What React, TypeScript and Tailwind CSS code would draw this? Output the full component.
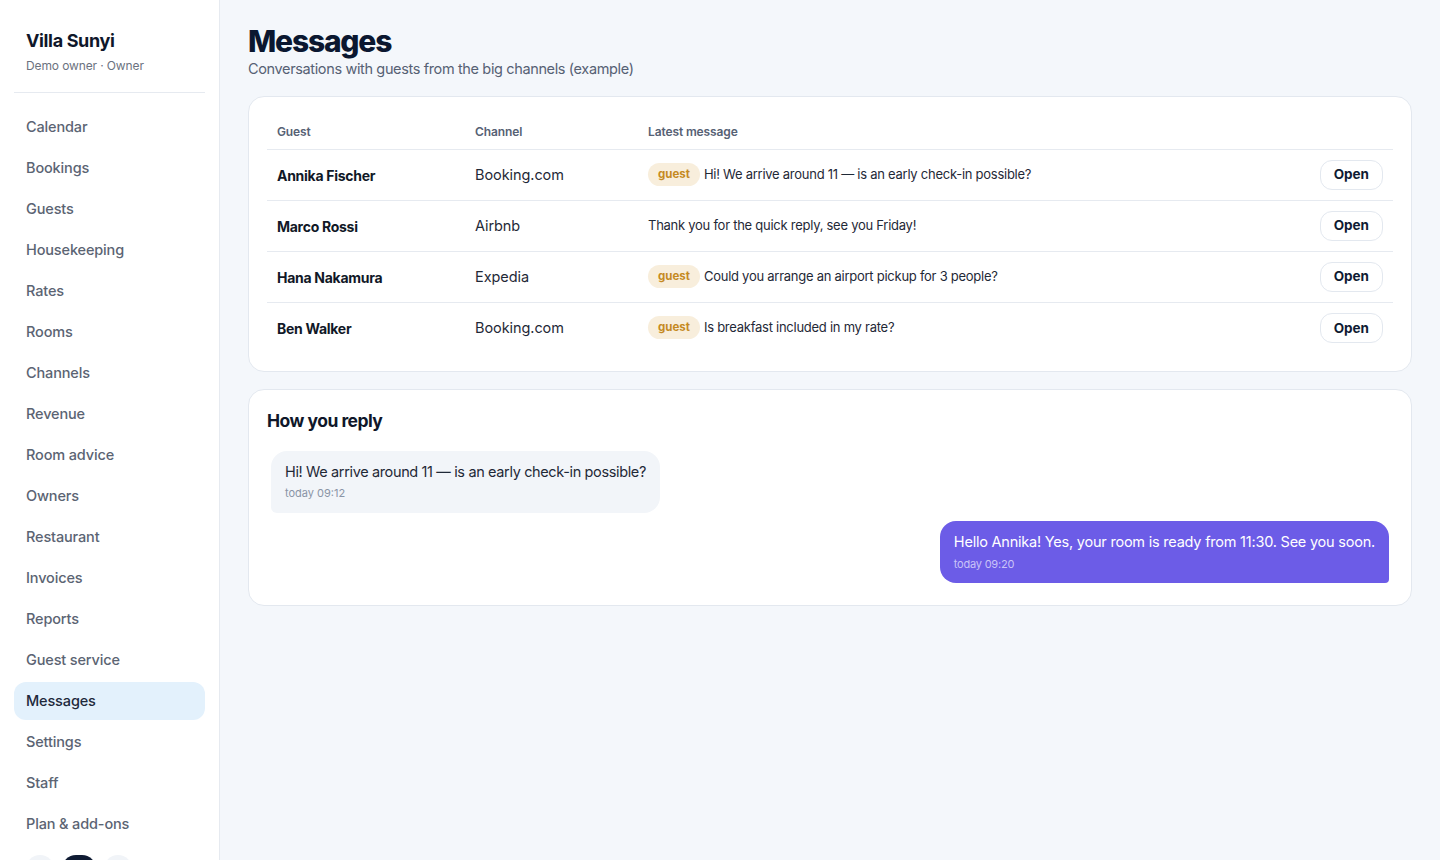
const navItems = [
  'Calendar',
  'Bookings',
  'Guests',
  'Housekeeping',
  'Rates',
  'Rooms',
  'Channels',
  'Revenue',
  'Room advice',
  'Owners',
  'Restaurant',
  'Invoices',
  'Reports',
  'Guest service',
  'Messages',
  'Settings',
  'Staff',
  'Plan & add-ons',
]

interface Conversation {
  guest: string
  channel: string
  message: string
  fromGuest: boolean
}

const conversations: Conversation[] = [
  {
    guest: 'Annika Fischer',
    channel: 'Booking.com',
    message: 'Hi! We arrive around 11 — is an early check-in possible?',
    fromGuest: true,
  },
  {
    guest: 'Marco Rossi',
    channel: 'Airbnb',
    message: 'Thank you for the quick reply, see you Friday!',
    fromGuest: false,
  },
  {
    guest: 'Hana Nakamura',
    channel: 'Expedia',
    message: 'Could you arrange an airport pickup for 3 people?',
    fromGuest: true,
  },
  {
    guest: 'Ben Walker',
    channel: 'Booking.com',
    message: 'Is breakfast included in my rate?',
    fromGuest: true,
  },
]

export default function App() {
  return (
    <div className="flex min-h-screen bg-[#f4f7fb] font-['Inter',sans-serif] text-[#0f172a]">
      {/* Sidebar */}
      <aside className="w-[220px] shrink-0 border-r border-[#e6eaf0] bg-white px-[14px] pt-[29px]">
        <div className="px-3 pb-[17px] border-b border-[#e6eaf0]">
          <div className="text-[18px] font-bold tracking-[-0.02em] leading-[24px]">Villa Sunyi</div>
          <div className="mt-[4px] text-[12px] text-[#6b7280] tracking-[-0.01em]">Demo owner · Owner</div>
        </div>
        <nav className="mt-[15px] flex flex-col gap-[3px]">
          {navItems.map((item) => (
            <div
              key={item}
              className={
                item === 'Messages'
                  ? 'h-[38px] flex items-center px-3 rounded-xl bg-[#e3f1fc] text-[14.5px] font-medium text-[#1e293b] tracking-[-0.01em]'
                  : 'h-[38px] flex items-center px-3 rounded-xl text-[14.5px] font-medium text-[#5b6473] tracking-[-0.01em]'
              }
            >
              {item}
            </div>
          ))}
        </nav>
        <div className="mt-[12px] flex gap-2 px-3">
          <span className="h-7 w-7 rounded-full bg-[#f1f4f8]" />
          <span className="h-7 w-[34px] rounded-full bg-[#0f1b33]" />
          <span className="h-7 w-7 rounded-full bg-[#f1f4f8]" />
        </div>
      </aside>

      {/* Main */}
      <main className="flex-1 pl-[28px] pr-[28px] pt-[22px]">
        <h1 className="text-[30px] font-extrabold leading-[38px] tracking-[-0.04em] text-[#0b1730]">Messages</h1>
        <p className="text-[14.5px] text-[#566174] tracking-[-0.025em] leading-[18px]">
          Conversations with guests from the big channels (example)
        </p>

        <section className="mt-[18px] rounded-2xl border border-[#e3e8ef] bg-white p-[18px]">
          <table className="w-full border-collapse text-left">
            <thead>
              <tr className="border-b border-[#e6eaf0]">
                <th className="h-[34px] w-[198px] px-[10px] text-[12px] font-semibold text-[#566174] tracking-[-0.01em]">Guest</th>
                <th className="h-[34px] w-[173px] px-[10px] text-[12px] font-semibold text-[#566174] tracking-[-0.01em]">Channel</th>
                <th className="h-[34px] px-[10px] text-[12px] font-semibold text-[#566174] tracking-[-0.01em]">Latest message</th>
                <th className="h-[34px] px-[10px]" />
              </tr>
            </thead>
            <tbody>
              {conversations.map((c, i) => (
                <tr key={c.guest} className={i < conversations.length - 1 ? 'border-b border-[#e6eaf0]' : ''}>
                  <td className="h-[51px] px-[10px] pt-[1px] text-[14px] font-bold text-[#111827] tracking-[-0.02em]">{c.guest}</td>
                  <td className="h-[51px] px-[10px] pt-[1px] text-[14.5px] text-[#1f2937] tracking-[-0.005em]">{c.channel}</td>
                  <td className="h-[51px] px-[10px]">
                    <div className="flex items-center gap-[4px]">
                      {c.fromGuest && (
                        <span className="rounded-full bg-[#f8eedc] px-[10px] py-[3px] text-[11.5px] font-bold text-[#c58a22]">
                          guest
                        </span>
                      )}
                      <span className="text-[13px] text-[#1f2937] tracking-[-0.02em]">{c.message}</span>
                    </div>
                  </td>
                  <td className="h-[51px] px-[10px] text-right">
                    <button className="h-[30px] rounded-xl border border-[#e3e8ef] bg-white px-[13px] text-[13.5px] font-bold text-[#0f1b33]">
                      Open
                    </button>
                  </td>
                </tr>
              ))}
            </tbody>
          </table>
        </section>

        <section className="mt-[17px] rounded-2xl border border-[#e3e8ef] bg-white px-[18px] pt-[20px] pb-[22px]">
          <h2 className="text-[17.5px] font-bold tracking-[-0.03em] text-[#0f172a] leading-[22px]">How you reply</h2>
          <div className="mt-[19px] flex flex-col gap-2 px-1">
            <div className="self-start rounded-2xl rounded-bl-md bg-[#f2f5f9] px-[14px] pt-[10px] pb-[11px]">
              <div className="text-[14.5px] text-[#1f2937] tracking-[-0.025em] leading-[22px]">
                Hi! We arrive around 11 — is an early check-in possible?
              </div>
              <div className="mt-[2px] text-[11px] text-[#8a94a6]">today 09:12</div>
            </div>
            <div className="self-end rounded-2xl rounded-br-sm bg-[#6c5ce7] px-[14px] pt-[10px] pb-[11px]">
              <div className="text-[14.5px] text-white tracking-[-0.015em] leading-[22px]">
                Hello Annika! Yes, your room is ready from 11:30. See you soon.
              </div>
              <div className="mt-[3px] text-[11px] text-[#c9c3f7] tracking-[-0.02em]">today 09:20</div>
            </div>
          </div>
        </section>
      </main>
    </div>
  )
}
